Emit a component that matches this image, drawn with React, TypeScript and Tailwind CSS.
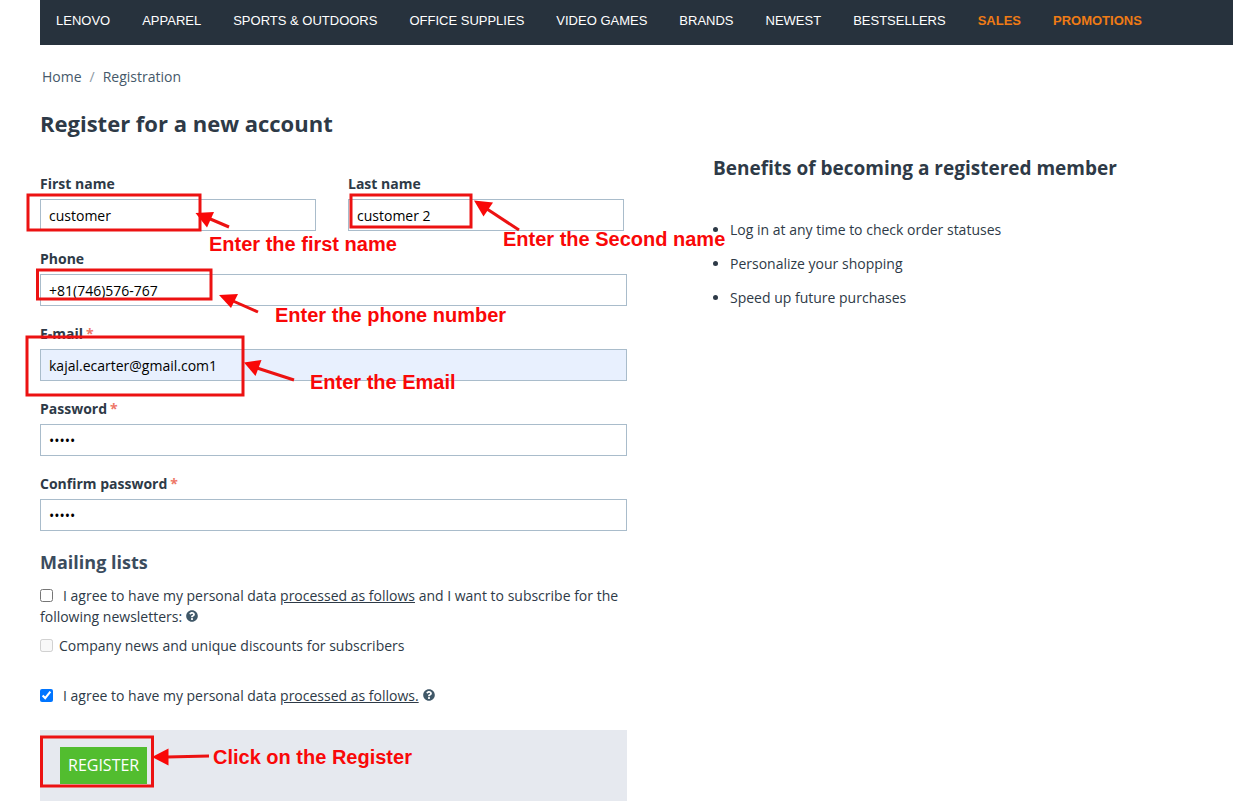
import { FaQuestionCircle } from "react-icons/fa";

const navItems = [
  "LENOVO",
  "APPAREL",
  "SPORTS & OUTDOORS",
  "OFFICE SUPPLIES",
  "VIDEO GAMES",
  "BRANDS",
  "NEWEST",
  "BESTSELLERS",
];

const promoItems = ["SALES", "PROMOTIONS"];

const benefits = [
  "Log in at any time to check order statuses",
  "Personalize your shopping",
  "Speed up future purchases",
];

type FieldProps = {
  id: string;
  label: string;
  value: string;
  type?: string;
  required?: boolean;
  autofilled?: boolean;
};

function Field({ id, label, value, type = "text", required, autofilled }: FieldProps) {
  return (
    <div className="flex flex-col gap-[5px]">
      <label htmlFor={id} className="leading-5 font-bold">
        {label}
        {required && <span className="ml-[3px] text-[#ee7768]">*</span>}
      </label>
      <input
        id={id}
        type={type}
        defaultValue={value}
        className={`h-8 w-full border border-[#a9bccb] px-2 pt-px text-black outline-none ${
          autofilled ? "bg-[#e8f0fe]" : "bg-white"
        }`}
      />
    </div>
  );
}

function Help() {
  return <FaQuestionCircle className="ml-1 inline size-3 align-baseline text-[#405868]" />;
}

function Header() {
  return (
    <nav className="ml-10 flex h-[45px] gap-8 bg-[#27323d] px-4 pt-[11px] font-['Liberation_Sans',Arial,sans-serif] text-[13px] leading-5 whitespace-nowrap text-white">
      {navItems.map((item) => (
        <a key={item} href="#">
          {item}
        </a>
      ))}
      {promoItems.map((item) => (
        <a key={item} href="#" className="font-bold text-[#ef7b15]">
          {item}
        </a>
      ))}
    </nav>
  );
}

// Red boxes, arrows and captions drawn over the form
function Annotations() {
  return (
    <div className="pointer-events-none absolute inset-0 font-['Liberation_Sans',Arial,sans-serif] text-xl leading-6 font-bold whitespace-nowrap text-[#f90808]">
      <svg className="absolute top-0 left-0" width="640" height="800" fill="none" stroke="#ec1212" strokeWidth="3">
        <rect x="28" y="195" width="172" height="35" />
        <rect x="351" y="195" width="120" height="32" />
        <rect x="37.5" y="270" width="173.5" height="29" />
        <rect x="27" y="337" width="216" height="58" />
        <rect x="41.5" y="737" width="111" height="49" />
        <g>
          <path d="M208 218L229 227" />
          <path d="M487 209L519 230" />
          <path d="M233 301L258 312" />
          <path d="M257 368L294 380" />
          <path d="M167 757L209 756" />
        </g>
        <g fill="#f90808" stroke="none">
          <path d="M195.5 213L214 212L207 227.5Z" />
          <path d="M474 200.5L493 202.5L483.5 216.5Z" />
          <path d="M219 295L238 294L231 308Z" />
          <path d="M244 362.5L261.5 360L255.5 376Z" />
          <path d="M152 757L168.5 748.5V765.5Z" />
        </g>
      </svg>
      <span className="absolute top-[232px] left-[209px]">Enter the first name</span>
      <span className="absolute top-[227px] left-[503px]">Enter the Second name</span>
      <span className="absolute top-[303px] left-[275px]">Enter the phone number</span>
      <span className="absolute top-[370px] left-[310px]">Enter the Email</span>
      <span className="absolute top-[745px] left-[213px]">Click on the Register</span>
    </div>
  );
}

export default function App() {
  return (
    <div className="relative bg-white pb-2 font-['Open_Sans',sans-serif] text-sm text-[#2e3a47]">
      <Header />

      <div className="pl-10">
        <div className="mt-[22px] flex gap-2 pl-[2px] leading-5 text-[#46596a]">
          <a href="#">Home</a>
          <span className="text-[#8c98a4]">/</span>
          <span>Registration</span>
        </div>

        <h1 className="mt-5 text-[22px] leading-8 font-bold">Register for a new account</h1>

        <main className="grid grid-cols-[587fr_520fr] gap-[86px]">
          <form className="mt-[35px]" onSubmit={(e) => e.preventDefault()}>
            <div className="flex flex-col gap-[18px]">
              <div className="grid grid-cols-2 gap-8 pr-[3px]">
                <Field id="first-name" label="First name" value="customer" />
                <Field id="last-name" label="Last name" value="customer 2" />
              </div>
              <Field id="phone" label="Phone" value="+81(746)576-767" type="tel" />
              <Field id="email" label="E-mail" value="kajal.ecarter@gmail.com1" required autofilled />
              <Field id="password" label="Password" value="12345" type="password" required />
              <Field id="confirm" label="Confirm password" value="12345" type="password" required />
            </div>

            <h2 className="mt-[19px] text-lg leading-6 font-bold text-[#3b4c5e]">Mailing lists</h2>

            <div className="mt-[11px] leading-[21px]">
              <input id="subscribe" type="checkbox" className="mr-[10px] size-[13px] align-[-1px]" />
              <label htmlFor="subscribe">
                I agree to have my personal data{" "}
                <a href="#" className="underline">
                  processed as follows
                </a>{" "}
                and I want to subscribe for the following newsletters:
              </label>
              <Help />
            </div>
            <div className="mt-2 leading-[21px]">
              <input id="news" type="checkbox" disabled className="mr-[6px] size-[13px] align-[-1px]" />
              <label htmlFor="news">Company news and unique discounts for subscribers</label>
            </div>
            <div className="mt-[29px] leading-[21px]">
              <input id="agree" type="checkbox" defaultChecked className="mr-[10px] size-[13px] align-[-1px]" />
              <label htmlFor="agree">
                I agree to have my personal data{" "}
                <a href="#" className="underline">
                  processed as follows.
                </a>
              </label>
              <Help />
            </div>

            <div className="mt-6 bg-[#e6e9ef] px-5 py-[17px]">
              <button type="submit" className="block h-[37px] bg-[#52bd2f] px-2 pb-[2px] text-base text-white">
                REGISTER
              </button>
            </div>
          </form>

          <aside className="mt-[17px]">
            <h2 className="text-[19px] leading-6 font-bold">Benefits of becoming a registered member</h2>
            <ul className="mt-10 list-disc space-y-[14px] pl-[17px] leading-5">
              {benefits.map((b) => (
                <li key={b}>{b}</li>
              ))}
            </ul>
          </aside>
        </main>
      </div>

      <Annotations />
    </div>
  );
}
